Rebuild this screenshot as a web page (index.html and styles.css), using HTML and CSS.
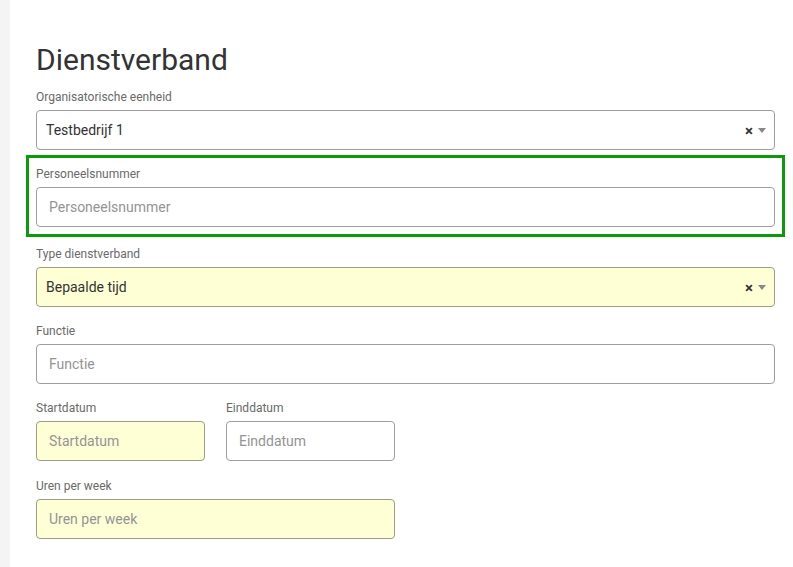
FILE: index.html
```html
<!DOCTYPE html>
<html lang="nl">
<head>
    <meta charset="UTF-8">
    <meta name="viewport" content="width=device-width, initial-scale=1.0">
    <title>Dienstverband</title>
    <link rel="stylesheet" href="styles.css">
</head>
<body>

    <!-- Side strip -->
    <div class="side-strip"></div>

    <!-- Main Content -->
    <main class="content">
        <h1>Dienstverband</h1>

        <div class="field">
            <label>Organisatorische eenheid</label>
            <div class="select">
                <span class="select-value">Testbedrijf 1</span>
                <span class="select-clear">&times;</span>
                <span class="select-arrow"></span>
            </div>
        </div>

        <div class="field highlighted">
            <label for="personeelsnummer">Personeelsnummer</label>
            <input type="text" id="personeelsnummer" placeholder="Personeelsnummer">
        </div>

        <div class="field">
            <label>Type dienstverband</label>
            <div class="select required">
                <span class="select-value">Bepaalde tijd</span>
                <span class="select-clear">&times;</span>
                <span class="select-arrow"></span>
            </div>
        </div>

        <div class="field">
            <label for="functie">Functie</label>
            <input type="text" id="functie" placeholder="Functie">
        </div>

        <div class="field-row">
            <div class="field">
                <label for="startdatum">Startdatum</label>
                <input type="text" id="startdatum" class="required" placeholder="Startdatum">
            </div>
            <div class="field">
                <label for="einddatum">Einddatum</label>
                <input type="text" id="einddatum" placeholder="Einddatum">
            </div>
            <div class="field wide">
                <label for="uren">Uren per week</label>
                <input type="text" id="uren" class="required" placeholder="Uren per week">
            </div>
        </div>
    </main>

</body>
</html>
```

FILE: styles.css
```css
/* Global Styles */
body {
    font-family: Roboto, "Liberation Sans", Arial, sans-serif;
    background-color: #fff;
    color: #333;
    margin: 0;
    display: flex;
    min-height: 100vh;
}

.side-strip {
    width: 10px;
    flex-shrink: 0;
    background-color: #f4f4f4;
}

/* Main Content */
.content {
    flex: 1;
    padding: 41px 18px 0 26px;
}

h1 {
    font-size: 30px;
    font-weight: 400;
    line-height: 38px;
    margin: 0 0 10px;
    color: #333;
}

/* Form fields */
.field {
    margin-bottom: 16px;
}

.field label {
    display: block;
    font-size: 12px;
    line-height: 17px;
    color: #6a6a6a;
    margin-bottom: 4px;
}

.field input {
    display: block;
    box-sizing: border-box;
    width: 100%;
    height: 40px;
    padding: 0 12px;
    font-family: inherit;
    font-size: 14px;
    color: #333;
    background-color: #fff;
    border: 1px solid #9e9e9e;
    border-radius: 4px;
    outline: none;
}

.field input::placeholder {
    color: #949494;
}

.field input.required {
    background-color: #ffffd6;
    border-color: #9c9c88;
}

/* Highlighted group */
.field.highlighted {
    margin: -11px -10px 9px;
    padding: 8px 7px 7px;
    border: 3px solid #0a9a0a;
}

/* Select box */
.select {
    display: flex;
    align-items: center;
    box-sizing: border-box;
    height: 40px;
    padding: 0 8px 0 9px;
    border: 1px solid #9e9e9e;
    border-radius: 4px;
    background-color: #fff;
    font-size: 14px;
}

.select.required {
    background-color: #ffffd6;
    border-color: #9c9c88;
}

.select-value {
    flex: 1;
    color: #333;
}

.select-clear {
    font-size: 15px;
    font-weight: bold;
    color: #333;
    margin-right: 5px;
    margin-top: 1px;
}

.select-arrow {
    width: 0;
    height: 0;
    border-style: solid;
    border-width: 5px 4px 0 4px;
    border-color: #888 transparent transparent transparent;
}

/* Date / hours row */
.field-row {
    display: grid;
    grid-template-columns: repeat(4, 1fr);
    column-gap: 21px;
}

.field-row .wide {
    grid-column: 1 / span 2;
    margin-top: 1px;
}
```
